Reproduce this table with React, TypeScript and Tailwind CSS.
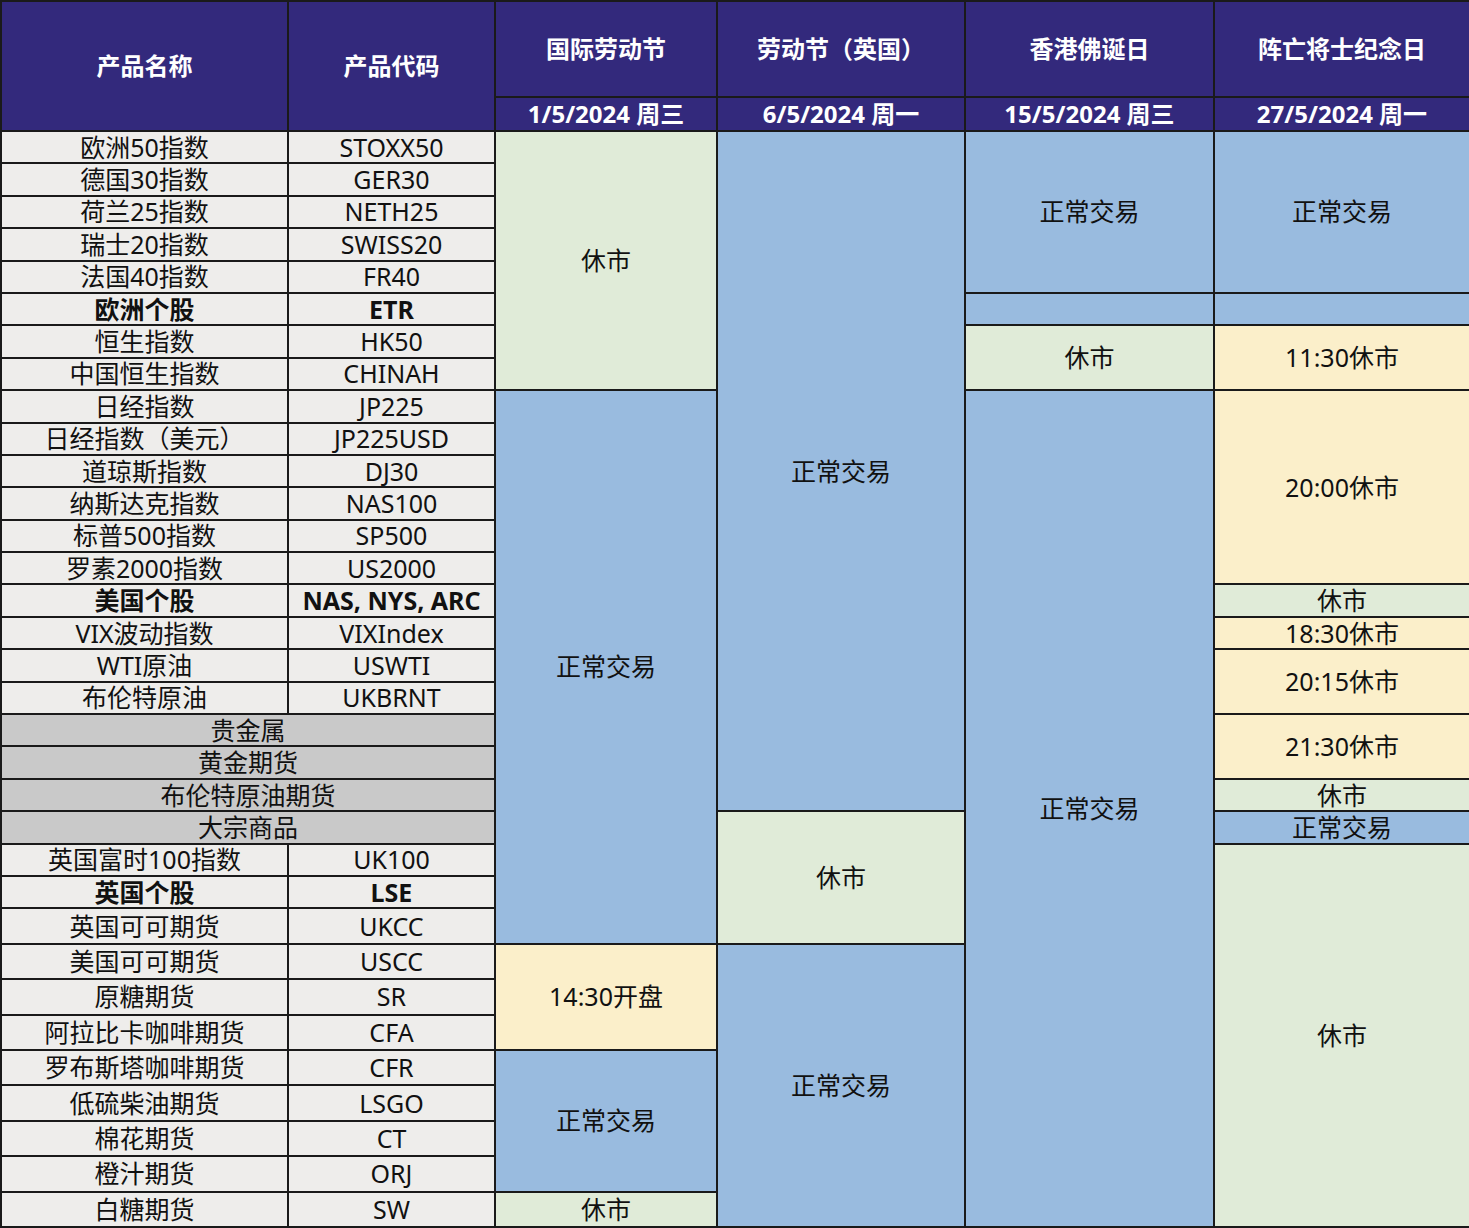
type Tone = "blue" | "green" | "yellow";

const toneClass: Record<Tone, string> = {
  blue: "bg-[#99bbdf]",
  green: "bg-[#e0ebd8]",
  yellow: "bg-[#fbefca]",
};

type Block = { span: number; text?: string; tone: Tone };

type Product = { name: string; code?: string; bold?: boolean; group?: boolean };

const products: Product[] = [
  { name: "欧洲50指数", code: "STOXX50" },
  { name: "德国30指数", code: "GER30" },
  { name: "荷兰25指数", code: "NETH25" },
  { name: "瑞士20指数", code: "SWISS20" },
  { name: "法国40指数", code: "FR40" },
  { name: "欧洲个股", code: "ETR", bold: true },
  { name: "恒生指数", code: "HK50" },
  { name: "中国恒生指数", code: "CHINAH" },
  { name: "日经指数", code: "JP225" },
  { name: "日经指数（美元）", code: "JP225USD" },
  { name: "道琼斯指数", code: "DJ30" },
  { name: "纳斯达克指数", code: "NAS100" },
  { name: "标普500指数", code: "SP500" },
  { name: "罗素2000指数", code: "US2000" },
  { name: "美国个股", code: "NAS, NYS, ARC", bold: true },
  { name: "VIX波动指数", code: "VIXIndex" },
  { name: "WTI原油", code: "USWTI" },
  { name: "布伦特原油", code: "UKBRNT" },
  { name: "贵金属", group: true },
  { name: "黄金期货", group: true },
  { name: "布伦特原油期货", group: true },
  { name: "大宗商品", group: true },
  { name: "英国富时100指数", code: "UK100" },
  { name: "英国个股", code: "LSE", bold: true },
  { name: "英国可可期货", code: "UKCC" },
  { name: "美国可可期货", code: "USCC" },
  { name: "原糖期货", code: "SR" },
  { name: "阿拉比卡咖啡期货", code: "CFA" },
  { name: "罗布斯塔咖啡期货", code: "CFR" },
  { name: "低硫柴油期货", code: "LSGO" },
  { name: "棉花期货", code: "CT" },
  { name: "橙汁期货", code: "ORJ" },
  { name: "白糖期货", code: "SW" },
];

const holidays = [
  { name: "国际劳动节", date: "1/5/2024 周三" },
  { name: "劳动节（英国）", date: "6/5/2024 周一" },
  { name: "香港佛诞日", date: "15/5/2024 周三" },
  { name: "阵亡将士纪念日", date: "27/5/2024 周一" },
];

const schedule: Block[][] = [
  [
    { span: 8, text: "休市", tone: "green" },
    { span: 17, text: "正常交易", tone: "blue" },
    { span: 3, text: "14:30开盘", tone: "yellow" },
    { span: 4, text: "正常交易", tone: "blue" },
    { span: 1, text: "休市", tone: "green" },
  ],
  [
    { span: 21, text: "正常交易", tone: "blue" },
    { span: 4, text: "休市", tone: "green" },
    { span: 8, text: "正常交易", tone: "blue" },
  ],
  [
    { span: 5, text: "正常交易", tone: "blue" },
    { span: 1, tone: "blue" },
    { span: 2, text: "休市", tone: "green" },
    { span: 25, text: "正常交易", tone: "blue" },
  ],
  [
    { span: 5, text: "正常交易", tone: "blue" },
    { span: 1, tone: "blue" },
    { span: 2, text: "11:30休市", tone: "yellow" },
    { span: 6, text: "20:00休市", tone: "yellow" },
    { span: 1, text: "休市", tone: "green" },
    { span: 1, text: "18:30休市", tone: "yellow" },
    { span: 2, text: "20:15休市", tone: "yellow" },
    { span: 2, text: "21:30休市", tone: "yellow" },
    { span: 1, text: "休市", tone: "green" },
    { span: 1, text: "正常交易", tone: "blue" },
    { span: 11, text: "休市", tone: "green" },
  ],
];

// which block starts at which row, per column
const starts: Map<number, Block>[] = schedule.map((col) => {
  const m = new Map<number, Block>();
  let r = 0;
  col.forEach((b) => {
    m.set(r, b);
    r += b.span;
  });
  return m;
});

const cell = "border-2 border-[#1a1a1a] p-0 text-center align-middle";

export default function App() {
  return (
    <div
      className="w-[1469px] bg-white text-[25px] leading-none text-[#111]"
      style={{ fontFamily: '"Noto Sans", "Noto Sans CJK SC", sans-serif' }}
    >
      <table className="w-[1469px] table-fixed border-collapse">
        <colgroup>
          <col className="w-[287px]" />
          <col className="w-[207px]" />
          <col className="w-[222px]" />
          <col className="w-[248px]" />
          <col className="w-[249px]" />
          <col className="w-[256px]" />
        </colgroup>
        <thead className="bg-[#33297c] text-[24px] font-bold text-white">
          <tr className="h-[96px]">
            <th rowSpan={2} className={cell}>
              产品名称
            </th>
            <th rowSpan={2} className={cell}>
              产品代码
            </th>
            {holidays.map((h) => (
              <th key={h.name} className={cell}>
                {h.name}
              </th>
            ))}
          </tr>
          <tr className="h-[34px]">
            {holidays.map((h) => (
              <th key={h.date} className={cell}>
                {h.date}
              </th>
            ))}
          </tr>
        </thead>
        <tbody>
          {products.map((p, i) => (
            <tr key={p.name} className={i < 24 ? "h-[32.4px]" : "h-[35.4px]"}>
              {p.group ? (
                <td colSpan={2} className={`${cell} bg-[#c9c9c9]`}>
                  {p.name}
                </td>
              ) : (
                <>
                  <td className={`${cell} bg-[#eeedeb] ${p.bold ? "font-bold" : ""}`}>{p.name}</td>
                  <td className={`${cell} bg-[#eeedeb] ${p.bold ? "font-bold" : ""}`}>{p.code}</td>
                </>
              )}
              {starts.map((m, c) => {
                const b = m.get(i);
                if (!b) return null;
                return (
                  <td key={c} rowSpan={b.span} className={`${cell} ${toneClass[b.tone]}`}>
                    {b.text}
                  </td>
                );
              })}
            </tr>
          ))}
        </tbody>
      </table>
    </div>
  );
}
